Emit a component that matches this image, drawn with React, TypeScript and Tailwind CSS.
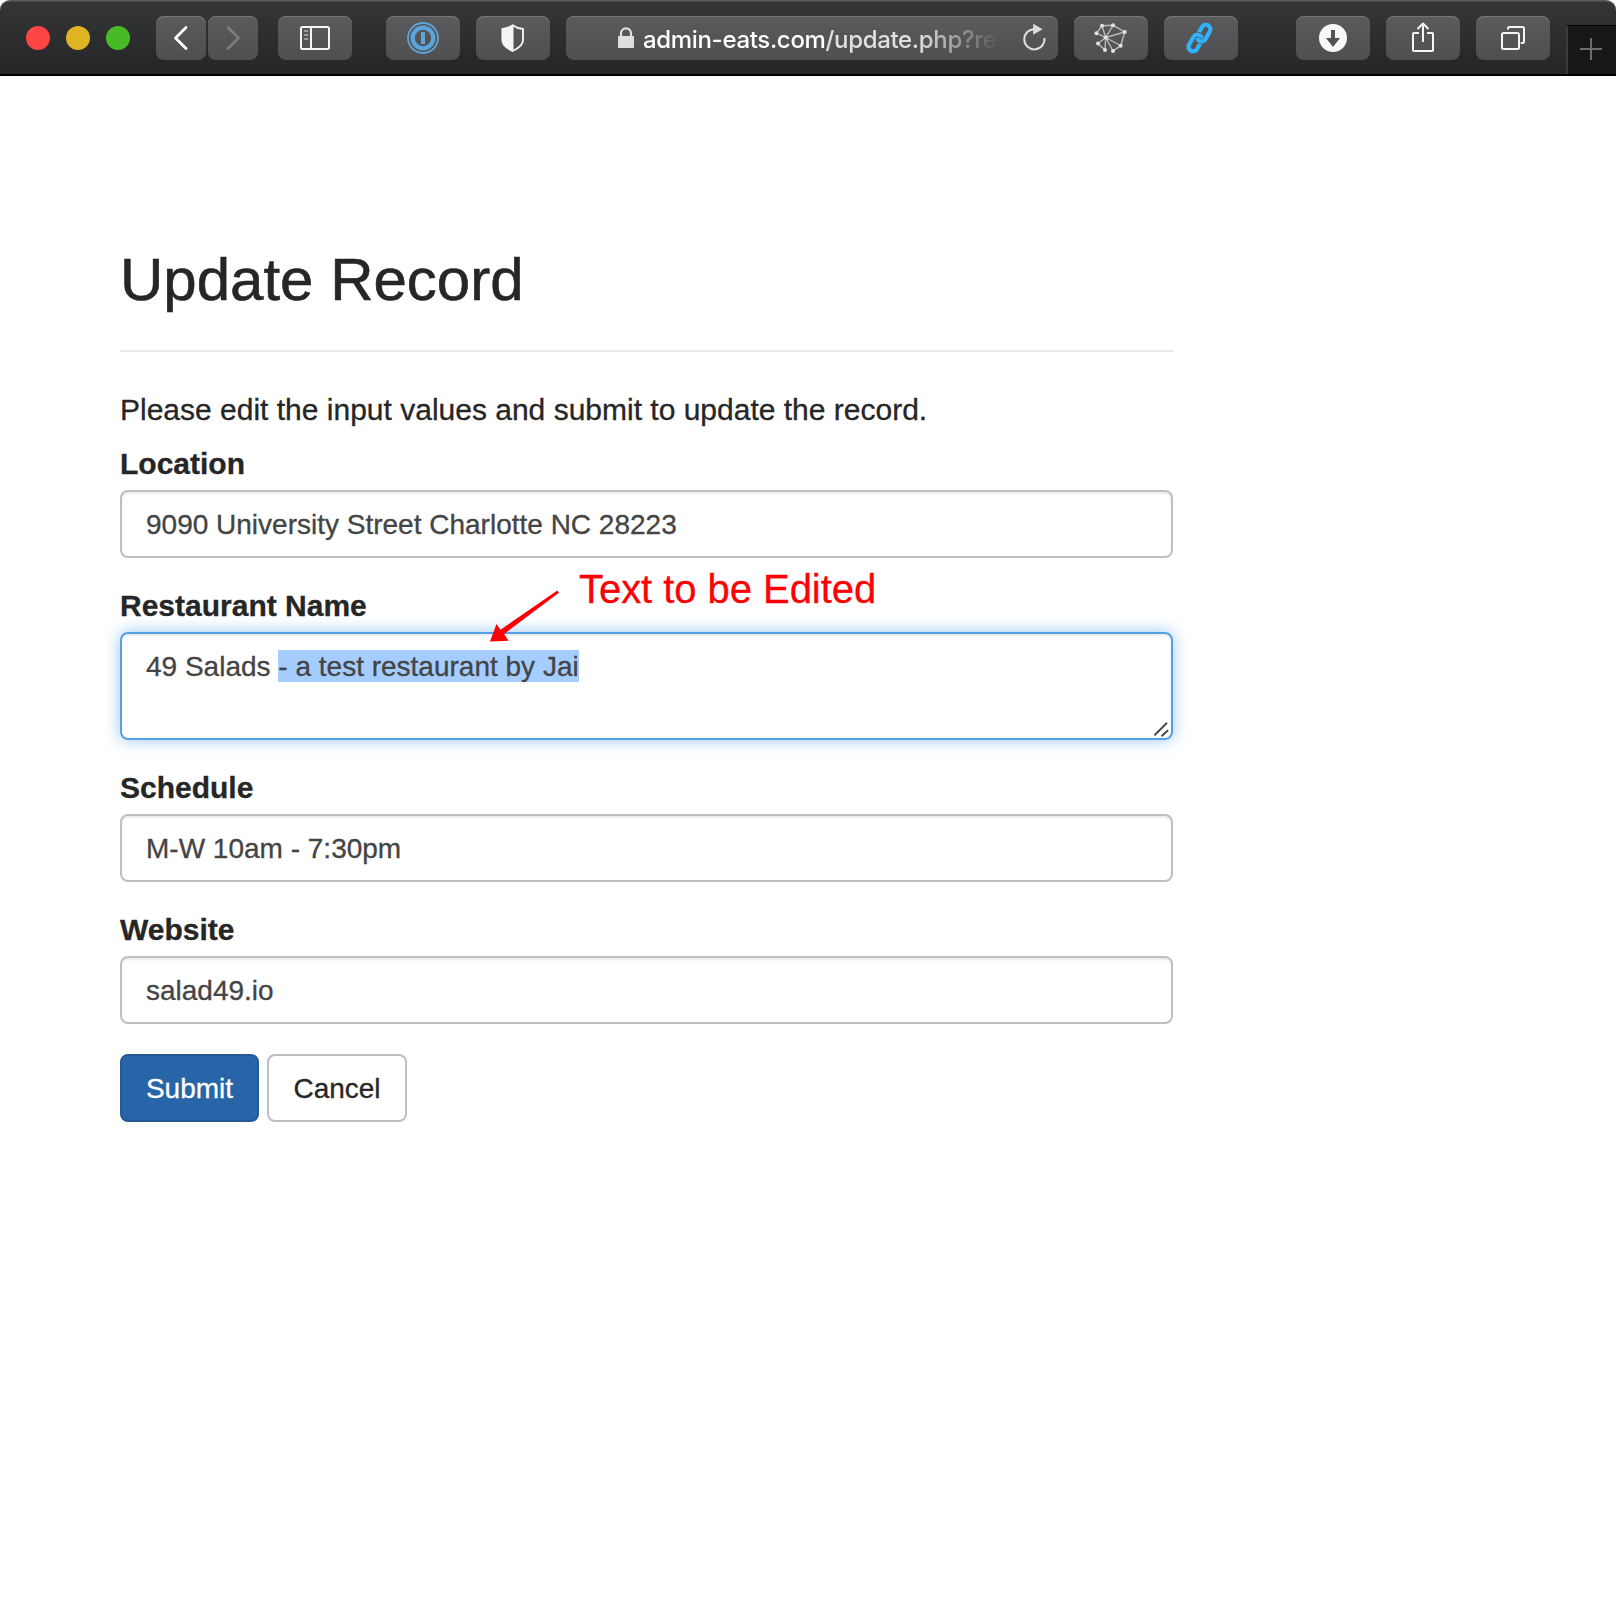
import React from 'react';

const BTN =
  'flex h-11 shrink-0 items-center justify-center rounded-lg bg-linear-to-b from-[#5b5b5d] to-[#4f4f51] shadow-[inset_0_1px_0_#757576]';

function ToolButton({ className = '', children }: { className?: string; children: React.ReactNode }) {
  return <div className={`${BTN} w-[74px] ${className}`}>{children}</div>;
}

function Toolbar() {
  return (
    <header className="flex h-[76px] w-full items-start rounded-t-[10px] border-t border-b-2 border-t-[#5a5c5e] border-b-black bg-linear-to-b from-[#343537] to-[#262628] pt-[15px] pl-[26px] shadow-[inset_0_1px_0_#48494b]">
      <div className="flex h-11 shrink-0 items-center gap-4">
        <span className="size-6 rounded-full bg-[#ff4543]" />
        <span className="size-6 rounded-full bg-[#dfb422]" />
        <span className="size-6 rounded-full bg-[#47ba25]" />
      </div>

      <div className="ml-[26px] flex gap-0.5">
        <div className={`${BTN} w-[50px]`}>
          <svg width="50" height="44" viewBox="0 0 50 44" fill="none" stroke="#fff" strokeWidth="2.8" strokeLinecap="round" strokeLinejoin="round">
            <path d="M30 11.5 19.5 22 30 32.5" />
          </svg>
        </div>
        <div className={`${BTN} w-[50px]`}>
          <svg width="50" height="44" viewBox="0 0 50 44" fill="none" stroke="#7d7d7f" strokeWidth="2.6" strokeLinecap="round" strokeLinejoin="round">
            <path d="M20 11.5 30.5 22 20 32.5" />
          </svg>
        </div>
      </div>

      <ToolButton className="ml-5">
        <svg width="74" height="44" viewBox="0 0 74 44" fill="none" stroke="#f5f5f6" strokeWidth="2">
          <rect x="23" y="11" width="28" height="22" rx="1.5" />
          <path d="M33 11v22" />
          <path d="M26 15h4.300M26 19h4.300M26 23h4.300" stroke="#b4b4b5" strokeWidth="1.700" />
        </svg>
      </ToolButton>

      <ToolButton className="ml-[34px]">
        <svg width="74" height="44" viewBox="0 0 74 44" fill="none" stroke="#5aa5dc">
          <circle cx="37" cy="22" r="15" strokeWidth="1.800" />
          <circle cx="37" cy="22" r="10.300" strokeWidth="4.200" />
          <path d="M37 16v12" strokeWidth="4" />
        </svg>
      </ToolButton>

      <ToolButton className="ml-4">
        <svg width="74" height="44" viewBox="0 0 74 44">
          <path d="M36.700 9.300c2.800 2 6.400 3.300 10.300 3.700v11c0 5-4.500 8.300-10.300 11-5.800-2.700-10.300-6-10.300-11V13c3.900-.4 7.500-1.700 10.300-3.700z" fill="none" stroke="#f5f5f6" strokeWidth="1.900" strokeLinejoin="round" />
          <path d="M37.500 9.500v25.700C31 32.300 26.400 29 26.400 24V13c4-.4 8-1.500 11.100-3.500z" fill="#f5f5f6" />
        </svg>
      </ToolButton>

      <div className={`${BTN} ml-4 w-[492px] justify-start! pl-[50px]`}>
        <svg className="shrink-0" width="20" height="44" viewBox="0 0 20 44">
          <rect x="2" y="20" width="16" height="12" rx="0.8" fill="#dededf" />
          <path d="M5 20.500v-3.200a5 5 0 0 1 10 0v3.200" fill="none" stroke="#dededf" strokeWidth="2.200" />
        </svg>
        <div className="ml-[7px] w-[357px] whitespace-nowrap pt-[3px] font-[Inter,sans-serif] text-[24px] leading-[30px] font-medium tracking-[-0.33px] text-white mask-[linear-gradient(to_right,#000_275px,transparent_356px)]">
          admin-eats.com<span className="text-[#e0e0e1]">/update.php?re</span>
        </div>
        <svg className="ml-[20px] shrink-0" width="30" height="44" viewBox="0 0 30 44">
          <path d="M14.800 13.200A10.100 10.100 0 1 0 24.400 22" fill="none" stroke="#dededf" strokeWidth="2" />
          <path d="M13.200 7.800v11l9.300-5.500z" fill="#dededf" />
        </svg>
      </div>

      <ToolButton className="ml-4">
        <svg width="74" height="44" viewBox="0 0 74 44" stroke="#b9b9ba" strokeWidth="1.400" fill="none">
          <path d="M28 9.700 39 9.300 50.700 16 46.700 29.700M31.700 21.500 28 9.700 22.500 17.300zM31.700 21.500 39 9.300M31.700 21.500 50.700 16M31.700 21.500 46.700 29.700 39 35zM31.700 21.500 31 34 24 27.500z" />
          <g fill="#e2e2e2" stroke="none">
            <circle cx="31.700" cy="21.500" r="2" />
            <circle cx="28" cy="9.700" r="2" />
            <circle cx="39" cy="9.300" r="2" />
            <circle cx="50.700" cy="16" r="2" />
            <circle cx="46.700" cy="29.700" r="2" />
            <circle cx="39" cy="35" r="2" />
            <circle cx="31" cy="34" r="2" />
            <circle cx="24" cy="27.500" r="2" />
            <circle cx="22.500" cy="17.300" r="2" />
          </g>
        </svg>
      </ToolButton>

      <ToolButton className="ml-4">
        <svg width="74" height="44" viewBox="0 0 74 44" fill="none" stroke="#2fb4fb" strokeWidth="4.200">
          <g transform="rotate(30 35.500 22)">
            <rect x="29.800" y="19.500" width="9" height="17.800" rx="4.500" />
            <rect x="32.200" y="6.700" width="9" height="17.800" rx="4.500" stroke="#555557" strokeWidth="5.800" />
            <rect x="32.200" y="6.700" width="9" height="17.800" rx="4.500" />
            <path d="M29.800 26v-2a4.500 4.500 0 0 1 4.500-4.500" stroke="#555557" strokeWidth="5.800" />
            <path d="M29.800 27v-3a4.500 4.500 0 0 1 4.500-4.500h1" />
          </g>
        </svg>
      </ToolButton>

      <ToolButton className="ml-[58px]">
        <svg width="74" height="44" viewBox="0 0 74 44">
          <circle cx="37" cy="22" r="14" fill="#f8f8f9" />
          <path d="M35 14h4v8h5l-7 9-7-9h5z" fill="#525254" />
        </svg>
      </ToolButton>

      <ToolButton className="ml-4">
        <svg width="74" height="44" viewBox="0 0 74 44" fill="none" stroke="#f5f5f6" strokeWidth="2" strokeLinejoin="round">
          <path d="M33 17h-5.200q-.8 0-.8.800v16.400q0 .8.800.8h18.400q.8 0 .8-.8V17.800q0-.8-.8-.8H41" />
          <path d="M37 26V7.500M31.500 13 37 7.500l5.500 5.500" />
        </svg>
      </ToolButton>

      <ToolButton className="ml-4">
        <svg width="74" height="44" viewBox="0 0 74 44" fill="none" stroke="#f5f5f6" strokeWidth="2">
          <rect x="26" y="17" width="17" height="16" rx="1.500" />
          <path d="M32 13.500v-1q0-1.500 1.500-1.500h13q1.500 0 1.500 1.500v13q0 1.500-1.500 1.500h-1.700" />
        </svg>
      </ToolButton>

      <div className="mt-[9px] ml-4 flex h-[49px] grow items-start border-t border-l-2 border-t-black border-l-[#3b3b3d] bg-[#171718]">
        <svg width="48" height="48" viewBox="0 0 48 48" stroke="#6c6c6e" strokeWidth="2">
          <path d="M12 23h22M23 12v22" />
        </svg>
      </div>
    </header>
  );
}

function FieldLabel({ children }: { children: React.ReactNode }) {
  return <div className="mb-[9px] pt-px text-[30px] leading-[34px] font-bold">{children}</div>;
}

function Field({ label, value }: { label: string; value: string }) {
  return (
    <div className="mb-[30px]">
      <FieldLabel>{label}</FieldLabel>
      <div className="flex h-[68px] items-center rounded-lg border-2 border-[#bfbfbf] px-6 pt-0.5 text-[28px] text-[#444] shadow-[inset_0_2px_2px_rgba(0,0,0,0.075)]">
        {value}
      </div>
    </div>
  );
}

export default function App() {
  return (
    <div className="min-h-[1604px] w-[1616px] bg-white font-['Liberation_Sans',Arial,sans-serif] text-[#262626]">
      <Toolbar />
      <main className="ml-[120px] w-[1053px] pt-[171px] [-webkit-text-stroke:0.3px]">
        <div className="mb-10 border-b-2 border-[#e8e8e8] pb-[37px]">
          <h2 className="text-[60px] leading-[66px] [-webkit-text-stroke:0.6px]">Update Record</h2>
        </div>
        <p className="mb-[19px] pt-px text-[30px] leading-[34px]">Please edit the input values and submit to update the record.</p>
        <Field label="Location" value="9090 University Street Charlotte NC 28223" />

        <div className="relative mb-[30px]">
          <FieldLabel>Restaurant Name</FieldLabel>
          <div className="relative h-[108px] rounded-lg border-2 border-[#549fe5] px-6 pt-4 text-[28px] leading-[34px] text-[#444] shadow-[inset_0_2px_2px_rgba(0,0,0,0.075),0_0_16px_rgba(82,160,229,0.6)]">
            49 Salads <span className="inline-block h-8 bg-[#a5cdff] align-top">- a test restaurant by Jai</span>
            <svg className="absolute right-0 bottom-0" width="20" height="20" viewBox="0 0 20 20" stroke="#4a4a4a" strokeWidth="2" strokeLinecap="round">
              <path d="M4 16.700 15.500 5.200M11 17.700l5.500-5" />
            </svg>
          </div>
          <svg className="absolute top-0 left-[368px]" width="74" height="56" viewBox="0 0 74 56" fill="#ff0004">
            <path d="M69.300 2.500 70.900 4.800 16 46 20.700 52.700 2 53.500 8.500 36 12.500 41.800z" />
          </svg>
          <div className="absolute -top-[21px] left-[459px] text-[40px] leading-[44px] tracking-[-0.05px] whitespace-nowrap text-[#ff0004]">Text to be Edited</div>
        </div>

        <Field label="Schedule" value="M-W 10am - 7:30pm" />
        <Field label="Website" value="salad49.io" />

        <div className="flex gap-2 text-[28px]">
          <button className="h-[68px] w-[139px] rounded-lg border-2 border-[#235a96] bg-[#2865a8] pt-0.5 text-white">Submit</button>
          <button className="h-[68px] w-[140px] rounded-lg border-2 border-[#bfbfbf] bg-white pt-0.5">Cancel</button>
        </div>
      </main>
    </div>
  );
}
